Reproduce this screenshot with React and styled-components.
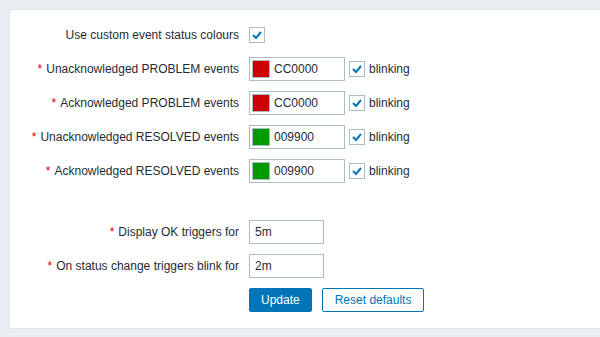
import { createGlobalStyle, styled } from 'styled-components';

const Global = createGlobalStyle`
  html, body {
    margin: 0;
    padding: 0;
    background: #ebeef0;
    font-family: "Liberation Sans", Arial, sans-serif;
    font-size: 12px;
    color: #1f2c33;
  }
`;

const Page = styled.div`
  padding: 9px 0 0 9px;
  overflow: hidden;
  height: 337px;
  box-sizing: border-box;
`;

const Panel = styled.div`
  width: 640px;
  background: #ffffff;
  border: 1px solid #dfe4e7;
  padding: 13px 0 16px 0;
`;

const FormList = styled.div`
  display: grid;
  grid-template-columns: 229px auto;
  column-gap: 10px;
  row-gap: 10px;
  align-items: center;
`;

const Label = styled.label`
  text-align: right;
  white-space: nowrap;
  line-height: 24px;
`;

const Asterisk = styled.span`
  color: #d40000;
  margin-right: 4px;
`;

const Field = styled.div`
  display: flex;
  align-items: center;
  gap: 4px;
  height: 24px;
`;

const Spacer = styled.div`
  grid-column: 1 / 3;
  height: 17px;
`;

const Box = styled.span`
  display: inline-flex;
  align-items: center;
  justify-content: center;
  width: 16px;
  height: 16px;
  box-sizing: border-box;
  border: 1px solid #acbbc4;
  background: #fff;
`;

const ColorInput = styled.div`
  display: flex;
  align-items: center;
  width: 96px;
  height: 24px;
  box-sizing: border-box;
  border: 1px solid #acbbc4;
  padding: 0 2px;
  gap: 4px;
`;

const Swatch = styled.span`
  width: 18px;
  height: 18px;
  box-sizing: border-box;
  border: 1px solid #acbbc4;
  background: ${p => p.$color};
`;

const TextInput = styled.div`
  width: 75px;
  height: 24px;
  box-sizing: border-box;
  border: 1px solid #acbbc4;
  padding: 0 5px;
  line-height: 22px;
`;

const ButtonRow = styled.div`
  display: flex;
  align-items: center;
  gap: 10px;
  height: 24px;
`;

const Button = styled.button`
  font-family: inherit;
  font-size: 12px;
  height: 24px;
  padding: 0 ${p => (p.$alt ? 12 : 11)}px;
  border-radius: 2px;
  border: 1px solid #0275b8;
  background: ${p => (p.$alt ? '#ffffff' : '#0275b8')};
  color: ${p => (p.$alt ? '#0275b8' : '#ffffff')};
`;

const Check = () => (
  <Box>
    <svg width="12" height="12" viewBox="0 0 12 12">
      <polyline points="2,6 5,9 10,3" fill="none" stroke="#0275b8" strokeWidth="2" />
    </svg>
  </Box>
);

const colours = [
  ['Unacknowledged PROBLEM events', '#cc0000', 'CC0000'],
  ['Acknowledged PROBLEM events', '#cc0000', 'CC0000'],
  ['Unacknowledged RESOLVED events', '#009900', '009900'],
  ['Acknowledged RESOLVED events', '#009900', '009900'],
];

const App = () => (
  <Page>
    <Global />
    <Panel>
      <FormList>
        <Label>Use custom event status colours</Label>
        <Field>
          <Check />
        </Field>
        {colours.map(([label, color, text]) => (
          <>
            <Label key={label}>
              <Asterisk>*</Asterisk>
              {label}
            </Label>
            <Field>
              <ColorInput>
                <Swatch $color={color} />
                {text}
              </ColorInput>
              <Check />
              blinking
            </Field>
          </>
        ))}
        <Spacer />
        <Label>
          <Asterisk>*</Asterisk>Display OK triggers for
        </Label>
        <Field>
          <TextInput>5m</TextInput>
        </Field>
        <Label>
          <Asterisk>*</Asterisk>On status change triggers blink for
        </Label>
        <Field>
          <TextInput>2m</TextInput>
        </Field>
        <span />
        <ButtonRow>
          <Button>Update</Button>
          <Button $alt>Reset defaults</Button>
        </ButtonRow>
      </FormList>
    </Panel>
  </Page>
);

export default App;
